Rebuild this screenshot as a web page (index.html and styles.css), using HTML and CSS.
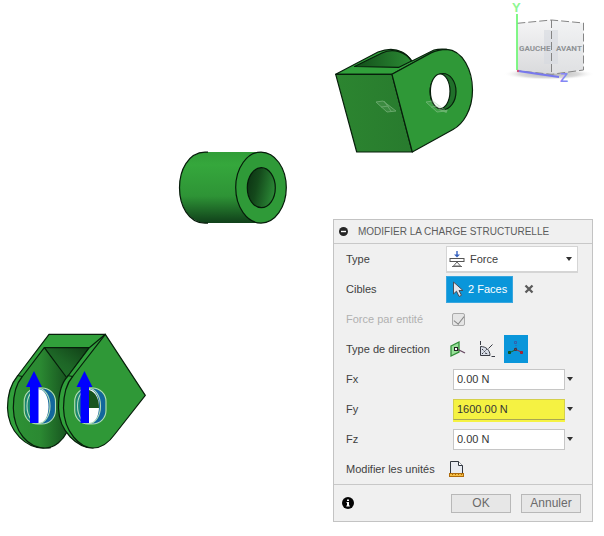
FILE: index.html
```html
<!DOCTYPE html>
<html lang="fr">
<head>
<meta charset="utf-8">
<title>Modifier la charge structurelle</title>
<link rel="stylesheet" href="styles.css">
</head>
<body>
<main class="viewport">
  <svg class="part part-clevis" viewBox="332 46 144 110" aria-hidden="true">
    <defs>
      <linearGradient id="clevis-in" x1="0" x2="1"><stop offset="0" stop-color="#124d19"/><stop offset="1" stop-color="#2b8b34"/></linearGradient>
      <linearGradient id="clevis-front" x1="0" x2="1"><stop offset="0" stop-color="#2c8530"/><stop offset="1" stop-color="#287b2e"/></linearGradient>
    </defs>
    <g stroke="#071f0b" stroke-width="1.2" stroke-linejoin="round">
      <path d="M335.7 74.3 378 52C386 49 395 48.5 402 52c4 2 7 5 10 9l22-11c4-1 8-1 12.500-.7L432 52.500 392 74.300Z" fill="#31a03b"/>
      <path d="M354.500 66.500 382 53c11-5.500 24-1 29.500 8L399 67.300Z" fill="url(#clevis-in)"/>
      <path d="M335.700 74.300H392L412.300 152H356.700Z" fill="url(#clevis-front)"/>
      <path d="M392 74.300 431 53C437 50 441 49.300 446.500 49.300 463 50 472.500 71 472.500 90 472.500 110 463 124 453 129.500L412.300 152Z" fill="#2f9837"/>
      <ellipse cx="443" cy="91.500" rx="13" ry="18" fill="#20702a"/>
      <ellipse cx="440.200" cy="91.300" rx="9.800" ry="17.300" fill="#fff"/>
    </g>
    <g fill="#a5d0a6" fill-opacity=".3" stroke="#a5d0a6" stroke-width="1" opacity=".5">
      <path d="m376 102 7-1 13 10-9 1ZM381 107l8-1M384 101l7 10"/>
      <path d="m426 102 7-1 13 10-9 1ZM431 107l8-1"/>
      <path d="m439 109 7 3 1-2" stroke-width="1.600"/>
    </g>
  </svg>

  <svg class="part part-bushing" viewBox="176 148 114 80" aria-hidden="true">
    <defs>
      <linearGradient id="tube" x1="0" y1="0" x2="0" y2="1"><stop offset="0" stop-color="#319d38"/><stop offset=".18" stop-color="#35a73c"/><stop offset=".62" stop-color="#2e9436"/><stop offset="1" stop-color="#10401a"/></linearGradient>
      <linearGradient id="bore" x1="0" y1=".3" x2="1" y2=".6"><stop offset="0" stop-color="#0d3514"/><stop offset=".35" stop-color="#14491b"/><stop offset="1" stop-color="#2c8b37"/></linearGradient>
    </defs>
    <path d="M261 152H205c-34 2-34 69 0 71h56Z" fill="url(#tube)"/>
    <path d="M208 152.200h-3c-34 1-34 70 0 71h3" fill="none" stroke="#061b0a" stroke-width="1.200"/>
    <ellipse cx="261" cy="187.600" rx="25.300" ry="35.500" fill="#2f9a38" stroke="#061b0a" stroke-width="1.200"/>
    <ellipse cx="261.300" cy="187.700" rx="14" ry="20" fill="url(#bore)" stroke="#061b0a" stroke-width="1.200"/>
  </svg>

  <svg class="part part-yoke" viewBox="4 330 146 122" aria-hidden="true">
    <defs>
      <linearGradient id="yoke-in" x1="1" y1="0" x2="0" y2="1"><stop offset="0" stop-color="#103f16"/><stop offset=".5" stop-color="#1d6526"/><stop offset="1" stop-color="#237a2d"/></linearGradient>
      <linearGradient id="yoke-left" x1="0" x2="1"><stop offset="0" stop-color="#2d9235"/><stop offset=".5" stop-color="#2b8932"/><stop offset="1" stop-color="#17541f"/></linearGradient>
      <g id="load">
        <rect x="27.500" y="388.500" width="27.500" height="35.500" rx="13" fill="#12679c"/>
        <path d="M31 389h-1c-7 10-7 25 0 34h2Z" fill="#198476"/>
        <path d="M38 389c14 0 14 35 0 35Z" fill="#fff"/>
        <g fill="none" stroke="#b2dcba" stroke-width="1.100">
          <rect x="24.200" y="388" width="31.300" height="36" rx="13.500"/>
          <ellipse cx="38.500" cy="406" rx="11.500" ry="17.500"/>
        </g>
        <path d="M34 371 42 387H38.500V423H30V387H26Z" fill="#0000ff"/>
      </g>
    </defs>
    <g stroke="#071f0b" stroke-width="1.200" stroke-linejoin="round">
      <path d="M49 334.300H105.300L67 386 50 448H45C27 449 8 432 7.500 408c0-12 2.500-23 10-32Z" fill="#31a03b"/>
      <path d="M44.300 347.700H89.300L66 379Z" fill="url(#yoke-in)"/>
      <path d="M44.300 347.700 22 377c-7 8-8.700 19-8.700 31C14 432 28 448 45 448c10 0 18-8 22-16V378Z" fill="url(#yoke-left)"/>
      <path d="M89.300 347.700 68 376c-8 8-9.500 20-9.500 32C59 432 78 448 93 448L105.300 334.300Z" fill="#31a03b"/>
      <path d="M105.300 334.300 73 376c-8 9-9.500 20-9.500 32C64 432 80 448 93 448c10 0 17-7 22-14L145.300 395.300Z" fill="#2f9837"/>
      <path d="m17.500 375.500 5 1M67.500 375.500l5 1" fill="none"/>
    </g>
    <use href="#load"/>
    <use href="#load" x="50.500"/>
    <path d="M89 390c7 2 10 9 10 18H89Z" fill="#18541f"/>
  </svg>

  <svg class="viewcube" viewBox="480 0 124 90" role="img" aria-label="Gauche, Avant">
    <defs>
      <linearGradient id="cube-a" x1="0" y1="0" x2="0" y2="1"><stop offset="0" stop-color="#f5f5f6"/><stop offset="1" stop-color="#d9dadc"/></linearGradient>
      <linearGradient id="cube-b" x1="0" y1="0" x2="0" y2="1"><stop offset="0" stop-color="#f2f3f4"/><stop offset="1" stop-color="#dfe0e2"/></linearGradient>
      <radialGradient id="cube-shadow"><stop offset="0" stop-color="#aaa"/><stop offset=".65" stop-color="#ccc" stop-opacity=".7"/><stop offset="1" stop-color="#fff" stop-opacity="0"/></radialGradient>
    </defs>
    <ellipse cx="549" cy="74" rx="46" ry="6" fill="url(#cube-shadow)"/>
    <path d="M517.300 23.300 551.500 20V74.300L517.300 70.700Z" fill="url(#cube-a)"/>
    <path d="M551.500 20 583.500 23V70L551.500 74.300Z" fill="url(#cube-b)"/>
    <path d="M544 30h14v34h-14Z" fill="#d6d9df" opacity=".6"/>
    <path d="M517.300 23.300 551.500 20 583.500 23V70L551.500 74.300 517.300 70.700M551.500 20V74" fill="none" stroke="#858585" stroke-dasharray="8 3"/>
    <text class="cube-face" x="519" y="51">GAUCHE</text>
    <text class="cube-face" x="556" y="51">AVANT</text>
    <path d="M517 14V70" stroke="#62f56a" stroke-width="1.600"/>
    <path d="M518 71 559 77" stroke="#7778ee" stroke-width="2"/>
    <circle cx="518" cy="71" r="1.200" fill="#d0507a"/>
    <text class="axis axis-y" x="512" y="12">Y</text>
    <text class="axis axis-z" x="560" y="82">Z</text>
  </svg>

  <form class="panel" aria-labelledby="panel-title">
    <header class="panel-head">
      <button class="plain collapse" type="button" aria-label="Réduire">
        <svg width="9" height="9" viewBox="0 0 9 9"><circle cx="4.500" cy="4.500" r="4.500" fill="#252525"/><path d="M2 4.500h5" stroke="#fff" stroke-width="1.400"/></svg>
      </button>
      <h1 class="title" id="panel-title">MODIFIER LA CHARGE STRUCTURELLE</h1>
    </header>

    <div class="rows">
      <div class="row">
        <label for="type">Type</label>
        <div class="select-box">
          <select id="type"><option>Force</option></select>
          <svg class="select-icon" width="16" height="18" viewBox="0 0 16 18" fill="none">
            <path d="M8 1v5" stroke="#3561c0" stroke-width="1.400"/><path d="M5 4.500h6L8 7.500Z" fill="#3561c0"/>
            <rect x="1" y="8.500" width="14" height="3" fill="#fff" stroke="#555"/>
            <path d="m8 12 3.500 4h-7ZM3 16.500h10" stroke="#666"/>
          </svg>
          <span class="caret select-caret"></span>
        </div>
      </div>

      <div class="row">
        <label for="targets">Cibles</label>
        <div class="targets">
          <button class="pick" id="targets" type="button">
            <svg width="12" height="17" viewBox="0 0 12 17"><path d="M1.500 1v12l3-2.800L7 15.500l2.500-1.200L7 9.500h4Z" fill="#e5e6ec" stroke="#4b4d58"/></svg>
            <span>2 Faces</span>
          </button>
          <button class="plain clear" type="button" aria-label="Effacer la sélection">
            <svg width="10" height="10" viewBox="0 0 10 10"><path d="m1.500 1.500 7 7m0-7-7 7" stroke="#5b5b5b" stroke-width="2.300"/></svg>
          </button>
        </div>
      </div>

      <div class="row disabled">
        <label for="per-entity">Force par entité</label>
        <input class="check" id="per-entity" type="checkbox" checked disabled>
      </div>

      <div class="row">
        <span id="direction-label">Type de direction</span>
        <div class="directions" role="radiogroup" aria-labelledby="direction-label">
          <label class="direction">
            <input type="radio" name="direction" aria-label="Normale">
            <svg width="18" height="18" viewBox="0 0 18 18" fill="none"><path d="m2 6 8-4v10l-8 4Z" fill="#98df98" stroke="#2f8d36" stroke-width="1.300"/><path d="m8 9 8 4" stroke="#654860" stroke-width="1.300"/><rect x="5.500" y="7.500" width="3" height="3" fill="#fff" stroke="#222"/></svg>
          </label>
          <label class="direction">
            <input type="radio" name="direction" aria-label="Angle">
            <svg width="18" height="18" viewBox="0 0 18 18" fill="none" stroke="#383b44"><path d="M2.500 15.500v-9C8 6.500 12 10 12 15.500Z" fill="#d9dee8"/><path d="M2.500 1v4M13.500 16.500H17M10.500 8.500l4-4"/><path d="m4 14 5-5M4 9l2 2M7 13l3 1" stroke-dasharray="2 1"/></svg>
          </label>
          <label class="direction">
            <input type="radio" name="direction" aria-label="Vecteurs" checked>
            <svg width="18" height="18" viewBox="0 0 18 18" fill="none"><path d="M9 5v4" stroke="#355fab" stroke-dasharray="1 1"/><path d="m4 12 4-2" stroke="#176b29"/><path d="m10 10 4 2" stroke="#a32c38"/><path d="M7.500 1.500h2v2h-2Z" stroke="#355fab"/><path d="M7.500 8.500h2v2h-2Z" fill="#555" stroke="#48333e"/><path d="M1.500 11.500h2v2h-2Z" fill="#116b14" stroke="#144c1b"/><path d="M13.500 11.500h2v2h-2Z" fill="#c32030" stroke="#9c2532"/></svg>
          </label>
        </div>
      </div>

      <div class="row">
        <label for="fx">Fx</label>
        <div class="value"><input id="fx" type="text" value="0.00 N"><button class="plain" type="button" aria-label="Options Fx"><span class="caret"></span></button></div>
      </div>
      <div class="row">
        <label for="fy">Fy</label>
        <div class="value"><input class="edited" id="fy" type="text" value="1600.00 N"><button class="plain" type="button" aria-label="Options Fy"><span class="caret"></span></button></div>
      </div>
      <div class="row">
        <label for="fz">Fz</label>
        <div class="value"><input id="fz" type="text" value="0.00 N"><button class="plain" type="button" aria-label="Options Fz"><span class="caret"></span></button></div>
      </div>

      <div class="row">
        <label for="units">Modifier les unités</label>
        <button class="plain units" id="units" type="button" aria-label="Modifier les unités">
          <svg width="16" height="18" viewBox="0 0 16 18" fill="none"><path d="M1.500 13V1.500h8l4 4V13" fill="#e8ebf1" stroke="#303640"/><path d="M9.500 1.500v4h4" fill="#fff" stroke="#303640"/><rect x=".5" y="13.500" width="14" height="3" fill="#f3bc42" stroke="#ae6b0c"/><path d="M3.500 14v1M6.500 14v1M9.500 14v1M12.500 14v1" stroke="#ae6b0c"/></svg>
        </button>
      </div>
    </div>

    <footer class="panel-foot">
      <button class="plain info" type="button" aria-label="Informations">
        <svg width="12" height="12" viewBox="0 0 12 12"><circle cx="6" cy="6" r="6" fill="#050505"/><path d="M5 2.500h2v1.600H5ZM4.500 5H7v3.500h.8v1H4.300v-1H5V6h-.5Z" fill="#fff"/></svg>
      </button>
      <div class="actions">
        <button class="action" type="button">OK</button>
        <button class="action" type="button">Annuler</button>
      </div>
    </footer>
  </form>
</main>
</body>
</html>
```
FILE: styles.css
```css
* { box-sizing: border-box; }

body {
  margin: 0;
  background: #fff;
  color: #404040;
  font: 11px/14px "Liberation Sans", Arial, sans-serif;
}

button, input, select { font: inherit; color: inherit; margin: 0; }
svg { display: block; flex: none; }

.viewport { position: relative; min-height: 100vh; }

/* Parts and the view cube float freely on the modelling canvas. */
.part, .viewcube { position: absolute; }
.part-clevis { left: 332px; top: 46px; width: 144px; }
.part-bushing { left: 176px; top: 148px; width: 114px; }
.part-yoke { left: 4px; top: 330px; width: 146px; }
.viewcube { right: 0; top: 0; width: 124px; }

.cube-face { font: bold 8px Roboto, sans-serif; fill: #8f9295; }
.axis { font: bold 13px "Liberation Sans", sans-serif; }
.axis-y { fill: #8df792; }
.axis-z { fill: #8587f4; }

.panel {
  position: absolute;
  top: 219px;
  right: 11px;
  width: 260px;
  background: #f0f0f0;
  border: 1px solid #c3c3c3;
}

.plain {
  display: flex;
  align-items: center;
  justify-content: center;
  padding: 0;
  border: 0;
  background: none;
}

.panel-head {
  display: flex;
  align-items: center;
  gap: 10px;
  height: 24px;
  padding: 0 5px;
  border-bottom: 1px solid #c8c8c8;
}

.title { margin: 0; font-size: 10px; font-weight: normal; color: #5c5c5c; white-space: nowrap; }

.row {
  display: grid;
  grid-template-columns: 100px 1fr;
  align-items: center;
  height: 30px;
  padding: 0 12px;
  white-space: nowrap;
}
.disabled { color: #b0b0b0; }

.caret {
  border: 3px solid transparent;
  border-top: 4px solid #303030;
  border-bottom: 0;
}

.select-box { position: relative; }
.select-box select {
  display: block;
  appearance: none;
  width: 132px;
  height: 27px;
  padding: 0 20px 0 23px;
  border: 1px solid #d5d5d5;
  border-bottom-width: 2px;
  border-radius: 0;
  background: #fff;
}
.select-icon { position: absolute; left: 3px; top: 4px; pointer-events: none; }
.select-caret { position: absolute; left: 120px; top: 11px; pointer-events: none; }

.targets { display: flex; align-items: center; gap: 11px; }
.pick {
  display: flex;
  align-items: center;
  gap: 4px;
  width: 67px;
  height: 27px;
  padding: 0 5px;
  border: 1px solid #38a6df;
  background: #0a96da;
  color: #fff;
}

.check {
  appearance: none;
  width: 13px;
  height: 13px;
  margin-left: 6px;
  border: 1px solid #aaa;
  border-radius: 2px;
  background: #e5e5e5;
}
.check:checked::after {
  content: "";
  display: block;
  width: 5px;
  height: 9px;
  margin-left: 3px;
  border: solid #858585;
  border-width: 0 1px 1px 0;
  transform: rotate(38deg);
}

.directions { display: flex; gap: 5px; }
.direction {
  display: flex;
  align-items: center;
  justify-content: center;
  width: 24px;
  height: 28px;
}
.direction:has(input:checked) { background: #0a96da; }
.direction input { position: absolute; opacity: 0; pointer-events: none; }

.value { display: flex; align-items: center; gap: 2px; padding-left: 7px; }
.value input {
  width: 112px;
  height: 21px;
  padding: 0 3px;
  border: 1px solid #c6c6c6;
  background: #fff;
  color: #353535;
}
.value .edited { background: #f5f242; border-color: #d5d04a; border-bottom-color: #a9a751; box-shadow: 0 2px #f5f242; }

.units { width: 22px; }

.panel-foot {
  display: flex;
  align-items: center;
  justify-content: space-between;
  height: 37px;
  padding: 0 11px 0 8px;
  border-top: 1px solid #c8c8c8;
}
.actions { display: flex; gap: 10px; }
.action {
  width: 60px;
  height: 19px;
  padding: 0;
  border: 1px solid #b8b8b8;
  background: #e7e7e7;
  color: #6a6a6a;
  font-size: 12px;
  line-height: 17px;
}
```
